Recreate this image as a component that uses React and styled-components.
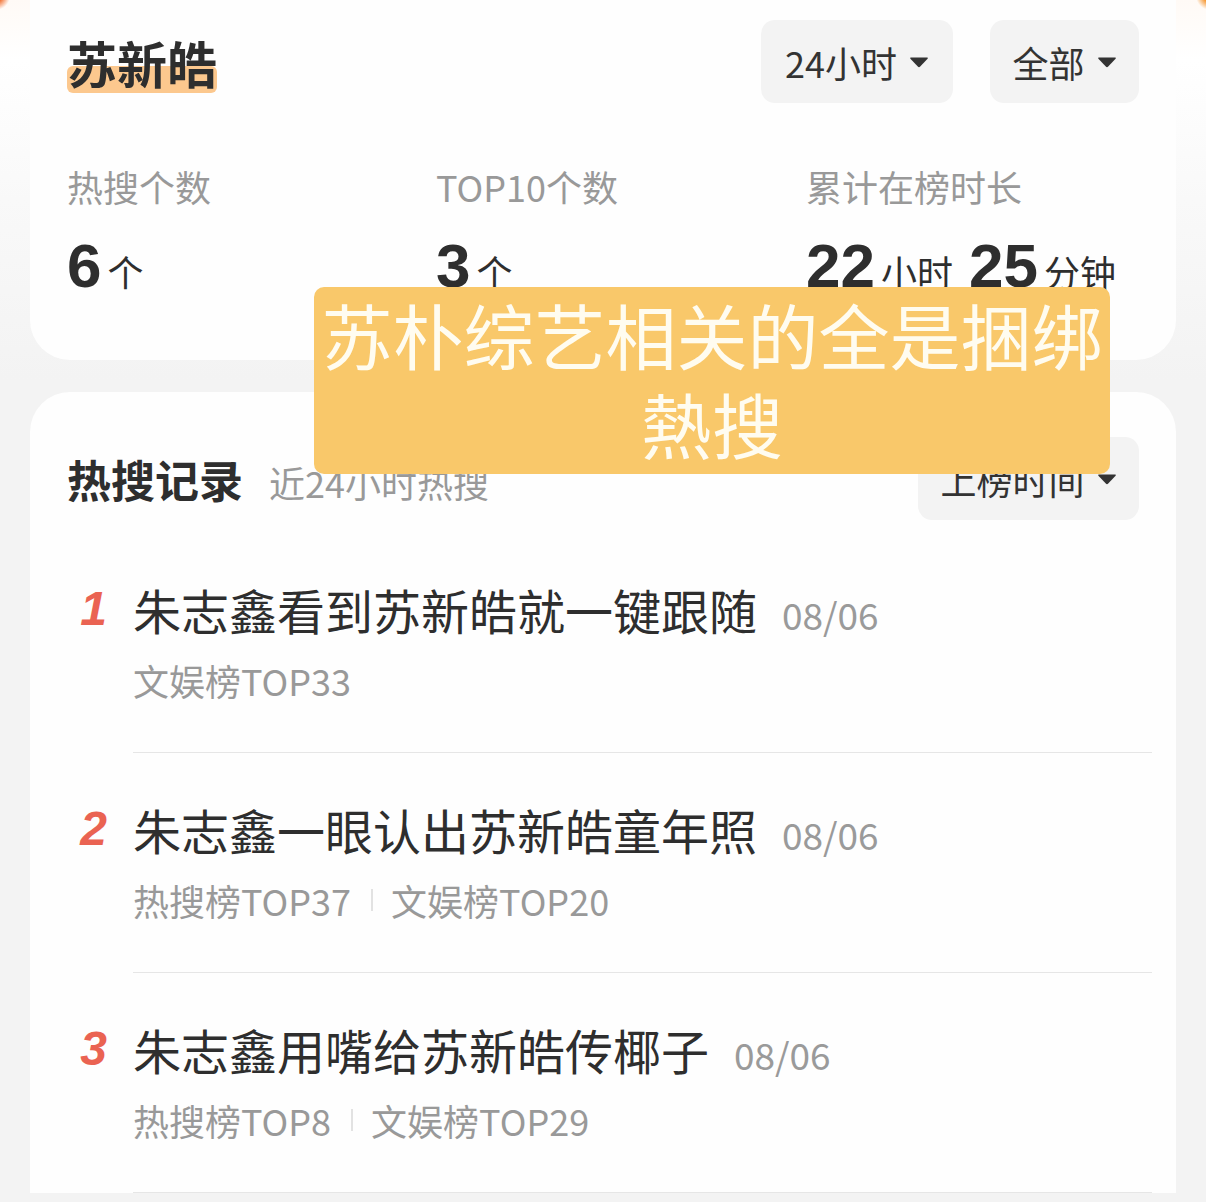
import React from 'react'
import styled, {createGlobalStyle} from 'styled-components'

const GlobalStyle = createGlobalStyle`
  html, body { margin: 0; padding: 0; }
  body {
    font-family: "Noto Sans CJK SC", "Noto Sans", sans-serif;
    color: #333;
    background: #f4f4f4;
  }
`

const Page = styled.div`
  position: relative;
  width: 1206px;
  height: 1202px;
  overflow: hidden;
  padding: 0 30px;
  box-sizing: border-box;
  background:
    radial-gradient(circle at -4px -4px, #ee5a22 0, #f3773a 6px, rgba(255,255,255,0) 14px),
    radial-gradient(circle at 1210px -4px, #ee7a14 0, #f5952e 6px, rgba(255,255,255,0) 14px),
    linear-gradient(180deg, #fffaf6 0, #ffffff 60px, #f9f9f9 200px, #f3f3f3 380px);
`

const Card = styled.section`
  background: #fefefe;
  border-radius: ${p => p.top ? '0 0 40px 40px' : '40px 40px 0 0'};
  margin-top: ${p => p.top ? '0' : '32px'};
  height: ${p => p.top ? '360px' : 'auto'};
  padding: ${p => p.top ? '20px 37px 0' : '45px 24px 0 37px'};
  box-sizing: border-box;
`

const HeadRow = styled.div`
  display: flex;
  align-items: center;
  justify-content: space-between;
  height: 83px;
  padding-right: ${p => p.inner ? '13px' : '0'};
`

const Name = styled.h1`
  position: relative;
  margin: 0;
  font-size: 50px;
  font-weight: 700;
  line-height: 60px;
  color: #2e2e2e;
  z-index: 0;
  &::before {
    content: '';
    position: absolute;
    left: 0;
    right: 0;
    top: 34px;
    height: 27px;
    border-radius: 6px;
    background: #fcc88e;
    z-index: -1;
  }
`

const Filters = styled.div`
  display: flex;
  gap: 37px;
`

const Select = styled.div`
  display: flex;
  align-items: center;
  justify-content: center;
  gap: 12px;
  height: 83px;
  width: ${p => p.w}px;
  background: #f3f3f3;
  border-radius: 14px;
  font-size: 36px;
  color: #333;
  white-space: nowrap;
  box-sizing: border-box;
`

const Caret = () => (
  <svg width="20" height="12" viewBox="0 0 20 12">
    <path d="M2 1.5 L18 1.5 Q19.5 1.5 18.6 2.8 L11.2 10.6 Q10 11.8 8.8 10.6 L1.4 2.8 Q0.5 1.5 2 1.5 Z" fill="#333" />
  </svg>
)

const Stats = styled.div`
  display: grid;
  grid-template-columns: 369px 370px 1fr;
  margin-top: 58px;
`

const Stat = styled.div`
  display: flex;
  flex-direction: column;
`

const StatLabel = styled.div`
  font-size: 36px;
  line-height: 50px;
  color: #999;
`

const StatValue = styled.div`
  margin-top: 24px;
  display: flex;
  align-items: baseline;
  gap: 6px;
  color: #2e2e2e;
`

const Num = styled.span`
  font-family: "Liberation Sans", Arial, sans-serif;
  font-weight: 700;
  font-size: 62px;
  line-height: 62px;
`

const Unit = styled.span`
  font-size: 36px;
  margin-right: 10px;
`

const SectionTitle = styled.div`
  display: flex;
  align-items: baseline;
  gap: 26px;
`

const SectionName = styled.h2`
  margin: 0;
  font-size: 44px;
  font-weight: 700;
  color: #2e2e2e;
`

const SectionHint = styled.span`
  font-size: 36px;
  color: #999;
`

const List = styled.ul`
  list-style: none;
  margin: 13px 0 0;
  padding: 0;
`

const Item = styled.li`
  display: flex;
`

const Rank = styled.div`
  width: 40px;
  margin-right: 26px;
  padding-top: 46px;
  text-align: right;
  font-family: "Liberation Sans", Arial, sans-serif;
  font-style: italic;
  font-weight: 700;
  font-size: 48px;
  line-height: 60px;
  color: #ea6352;
`

const Body = styled.div`
  flex: 1;
  padding: 46px 0 47px;
  border-bottom: 1px solid #e6e6e6;
`

const TitleLine = styled.div`
  display: flex;
  align-items: baseline;
  gap: 25px;
  line-height: 60px;
`

const Topic = styled.span`
  font-size: 48px;
  color: #2e2e2e;
`

const Date = styled.span`
  font-size: 37px;
  color: #9a9a9a;
`

const Tags = styled.div`
  display: flex;
  align-items: center;
  margin-top: 11px;
  height: 50px;
  font-size: 36px;
  color: #999;
`

const Sep = styled.i`
  display: inline-block;
  width: 2px;
  height: 22px;
  margin: 0 18px 0 20px;
  background: #e2e2e2;
`

const Overlay = styled.div`
  position: absolute;
  left: 314px;
  top: 287px;
  width: 796px;
  height: 187px;
  padding-top: 2px;
  box-sizing: border-box;
  background: #f9c86a;
  border-radius: 10px;
  color: #fffcf0;
  font-size: 71px;
  line-height: 89px;
  text-align: center;
`

const records = [
  {rank: 1, title: '朱志鑫看到苏新皓就一键跟随', date: '08/06', tags: ['文娱榜TOP33']},
  {rank: 2, title: '朱志鑫一眼认出苏新皓童年照', date: '08/06', tags: ['热搜榜TOP37', '文娱榜TOP20']},
  {rank: 3, title: '朱志鑫用嘴给苏新皓传椰子', date: '08/06', tags: ['热搜榜TOP8', '文娱榜TOP29']},
]

const App = () => (
  <>
    <GlobalStyle />
    <Page>
      <Card top>
        <HeadRow>
          <Name>苏新皓</Name>
          <Filters>
            <Select w={192}>24小时 <Caret /></Select>
            <Select w={149}>全部 <Caret /></Select>
          </Filters>
        </HeadRow>
        <Stats>
          <Stat>
            <StatLabel>热搜个数</StatLabel>
            <StatValue><Num>6</Num><Unit>个</Unit></StatValue>
          </Stat>
          <Stat>
            <StatLabel>TOP10个数</StatLabel>
            <StatValue><Num>3</Num><Unit>个</Unit></StatValue>
          </Stat>
          <Stat>
            <StatLabel>累计在榜时长</StatLabel>
            <StatValue><Num>22</Num><Unit>小时</Unit><Num>25</Num><Unit>分钟</Unit></StatValue>
          </Stat>
        </Stats>
      </Card>

      <Card>
        <HeadRow inner>
          <SectionTitle>
            <SectionName>热搜记录</SectionName>
            <SectionHint>近24小时热搜</SectionHint>
          </SectionTitle>
          <Select w={221}>上榜时间 <Caret /></Select>
        </HeadRow>
        <List>
          {records.map(r => (
            <Item key={r.rank}>
              <Rank>{r.rank}</Rank>
              <Body>
                <TitleLine>
                  <Topic>{r.title}</Topic>
                  <Date>{r.date}</Date>
                </TitleLine>
                <Tags>
                  {r.tags.map((t, i) => (
                    <React.Fragment key={t}>
                      {i > 0 && <Sep />}
                      <span>{t}</span>
                    </React.Fragment>
                  ))}
                </Tags>
              </Body>
            </Item>
          ))}
        </List>
      </Card>

      <Overlay>苏朴综艺相关的全是捆绑<br />熱搜</Overlay>
    </Page>
  </>
)

export default App
